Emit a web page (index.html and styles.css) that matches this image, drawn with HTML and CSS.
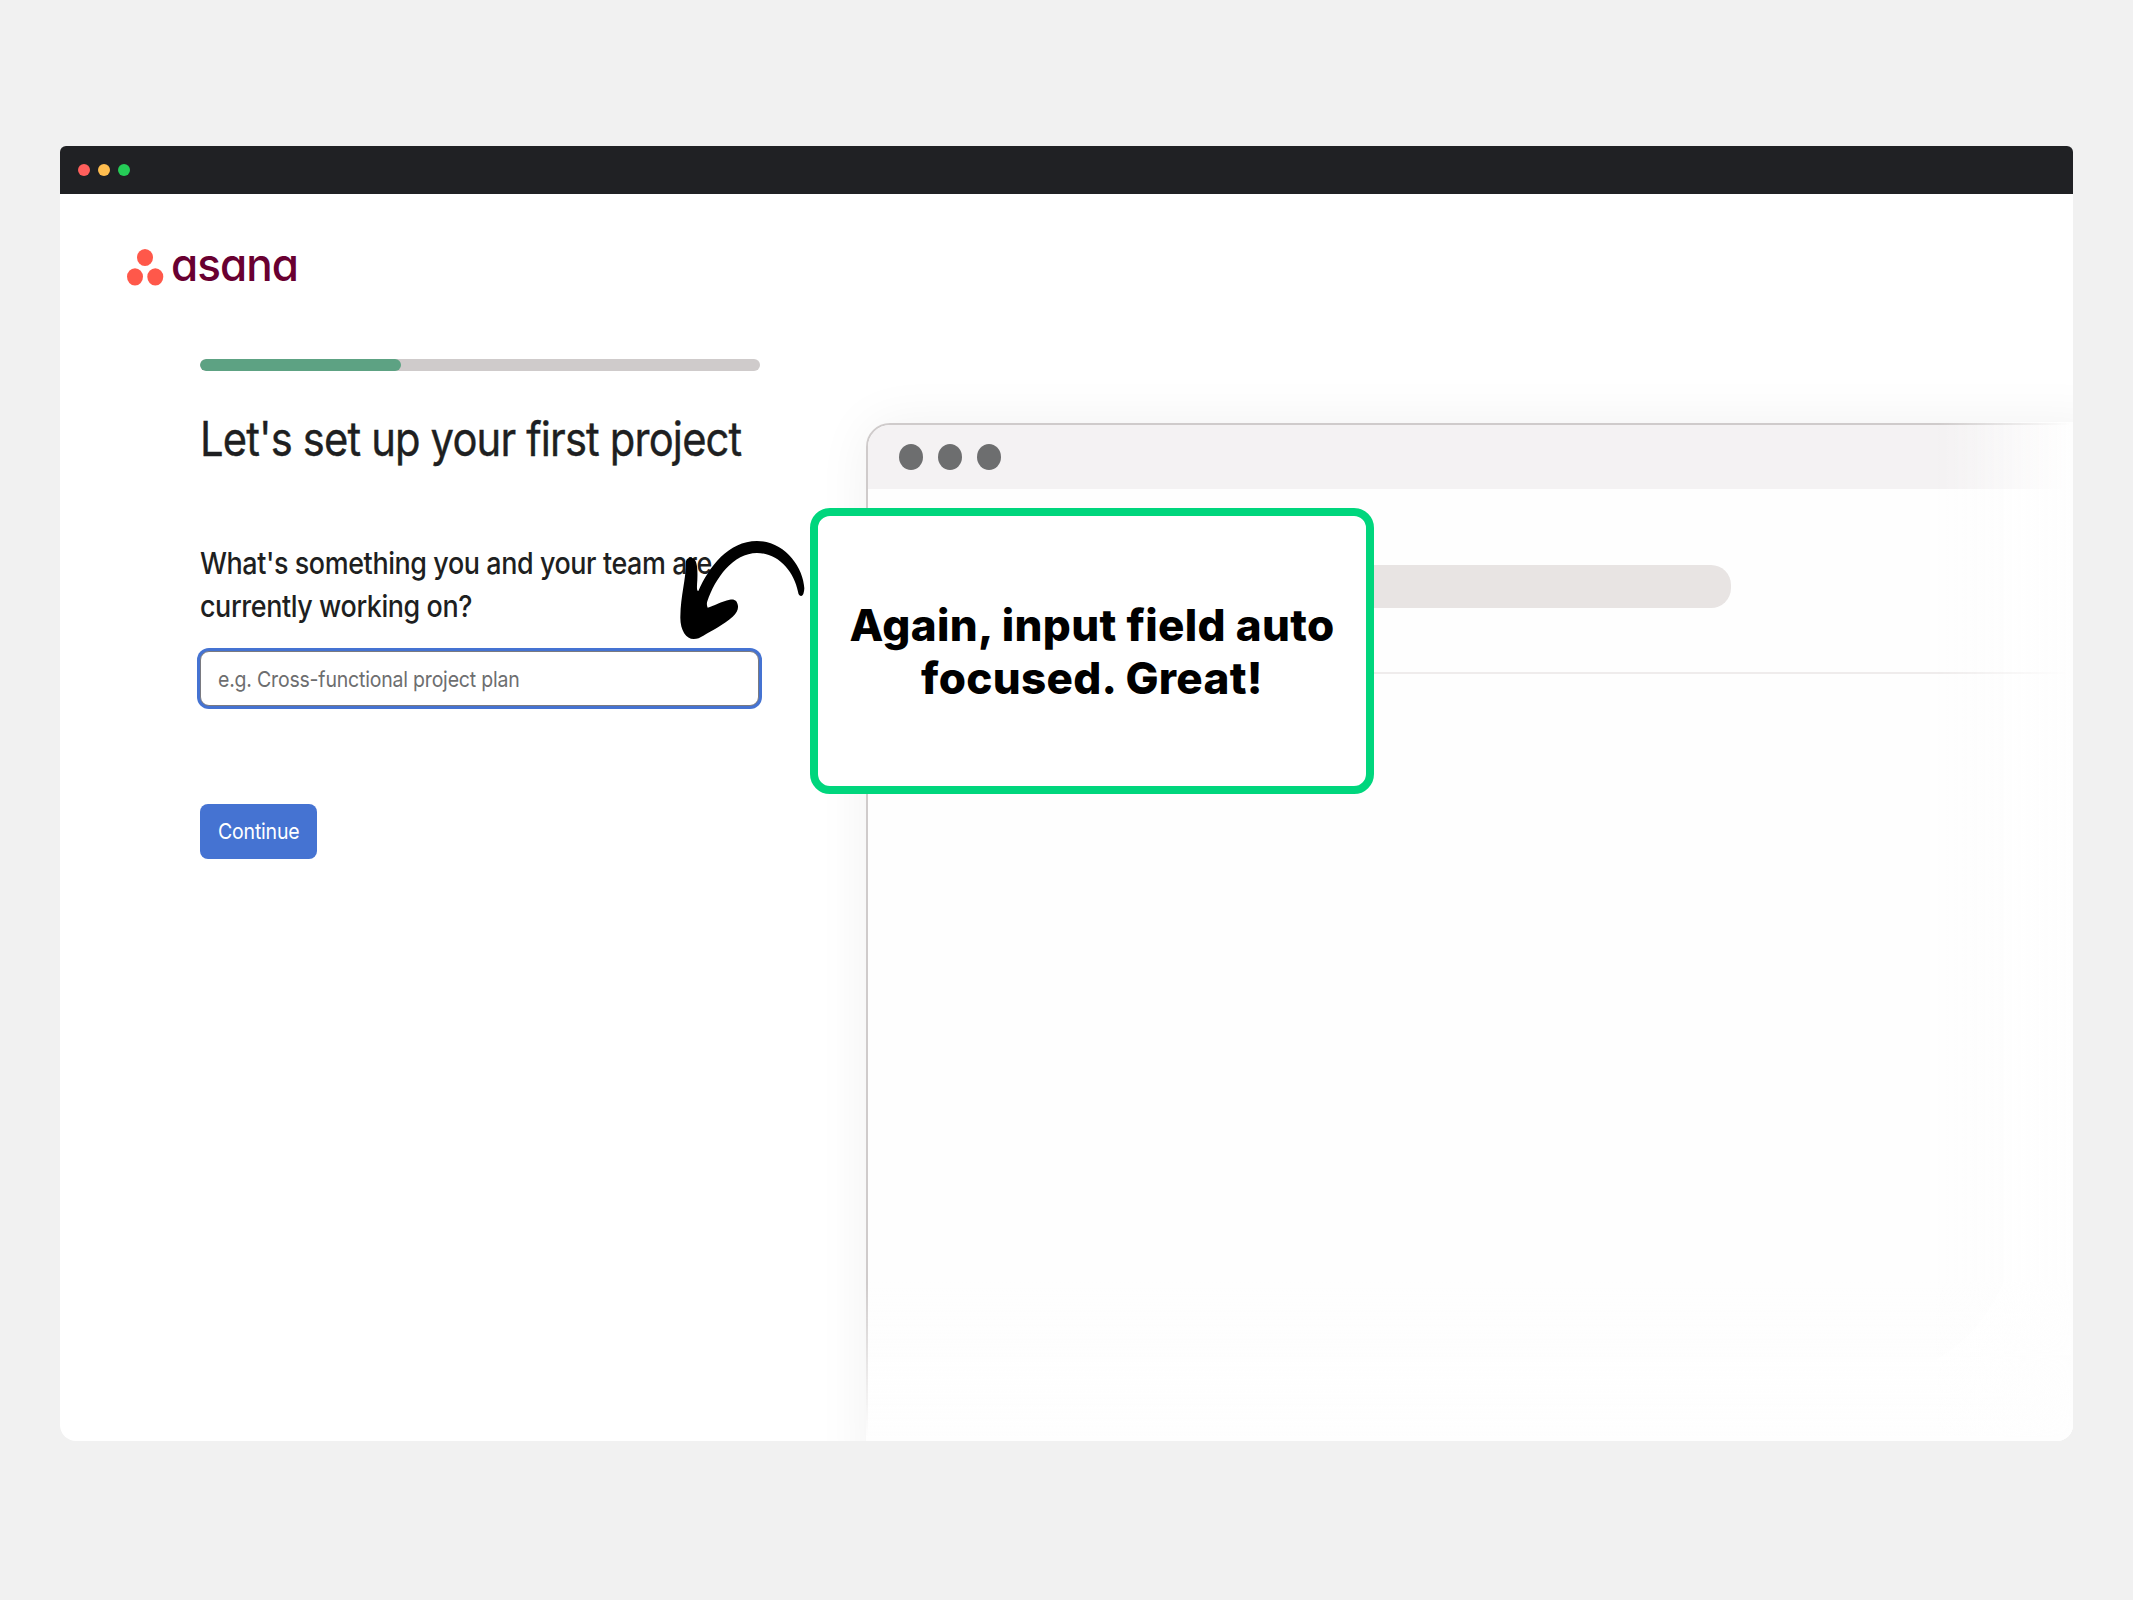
FILE: index.html
```html
<!DOCTYPE html>
<html lang="en">
<head>
<meta charset="utf-8">
<title>Asana – Set up your first project</title>
<link rel="stylesheet" href="styles.css">
</head>
<body>
<div class="window">
  <header class="titlebar">
    <span class="light light-close"></span>
    <span class="light light-min"></span>
    <span class="light light-max"></span>
  </header>
  <main class="content">
    <section class="setup">
      <div class="logo">
        <svg class="logo-mark" viewBox="0 0 38 38" width="38" height="38">
          <g fill="#ff584a">
            <ellipse cx="19" cy="9.5" rx="8" ry="8.6"/>
            <ellipse cx="9" cy="28.8" rx="8" ry="8.6"/>
            <ellipse cx="29.3" cy="28.8" rx="8" ry="8.6"/>
          </g>
        </svg>
        <span class="logo-word">asana</span>
      </div>
      <form class="form">
        <div class="progress"><div class="progress-fill"></div></div>
        <h1 class="heading"><span class="fit fit-heading">Let's set up your first project</span></h1>
        <label class="question" for="project"><span class="fit fit-question">What's something you and your team are<br>currently working on?</span></label>
        <div class="field" id="project"><span class="fit fit-placeholder">e.g. Cross-functional project plan</span></div>
        <button class="continue" type="button"><span class="fit fit-continue">Continue</span></button>
      </form>
    </section>
    <section class="preview-area">
      <div class="preview">
        <div class="preview-bar">
          <span class="preview-dot"></span>
          <span class="preview-dot"></span>
          <span class="preview-dot"></span>
        </div>
        <div class="preview-top"><div class="preview-title"></div></div>
      </div>
    </section>
  </main>
</div>
<svg class="arrow" viewBox="0 0 540 420" width="180" height="140">
  <path d="M424 228 Q432 226 433 205 C430 140 372 63 291 63 C205 63 148 140 115 213 C109 214 111 195 112 180 C113 155 112 142 109 130 C106 110 80 108 78 124 C78 180 62 225 61 290 C60 330 78 357 101 357 C112 357 120 353 130 347 C155 332 190 314 218 290 C230 280 235 268 234 258 C232 242 224 236 209 239 C185 244 160 258 143 263 C140 255 140 250 142 244 C165 175 220 99 291 99 C355 99 402 155 414 215 Q416 228 424 228 Z"/>
</svg>
<aside class="callout"><p class="callout-text">Again, input field auto<br>focused. Great!</p></aside>
</body>
</html>
```
FILE: styles.css
```css
* { box-sizing: border-box; }

body {
  margin: 0;
  width: 2133px;
  height: 1600px;
  padding: 146px 60px 159px;
  background: #f1f1f1;
  font-family: Inter, "Liberation Sans", sans-serif;
  color: #1e1f21;
  position: relative;
  overflow: hidden;
}

.window {
  width: 2013px;
  height: 1295px;
  border-radius: 6px 6px 16px 16px;
  overflow: hidden;
  background: #fff;
  display: flex;
  flex-direction: column;
}

.titlebar {
  height: 48px;
  flex: none;
  padding-left: 18px;
  background: #202124;
  display: flex;
  align-items: center;
  gap: 8px;
}
.light { width: 12px; height: 12px; border-radius: 50%; }
.light-close { background: #ff5f5c; }
.light-min { background: #ffbd4f; }
.light-max { background: #25cc57; }

.content { flex: 1; display: flex; min-height: 0; }

.setup { width: 806px; flex: none; padding: 54px 0 0 66px; }

.logo { height: 38px; display: flex; align-items: center; }
.logo-mark { flex: none; }
.logo-word {
  margin: 0 0 7px 7px;
  font-size: 46px;
  line-height: 38px;
  font-weight: 500;
  letter-spacing: -1px;
  font-feature-settings: "cv11";
  color: #690031;
  transform: scaleX(0.957);
  transform-origin: left center;
}

.form {
  width: 559.5px;
  margin: 72.5px 0 0 74px;
  display: flex;
  flex-direction: column;
  align-items: flex-start;
}

.progress {
  width: 559.5px;
  height: 12.5px;
  border-radius: 7px;
  background: #cfcbcb;
  overflow: hidden;
}
.progress-fill { width: 201px; height: 100%; border-radius: 7px; background: #5da283; }

.fit { display: inline-block; white-space: nowrap; transform-origin: left center; }
.fit-heading { transform: scaleX(0.869); letter-spacing: -0.02em; }
.fit-question { transform: scaleX(0.882); letter-spacing: -0.015em; }
.fit-placeholder { transform: scaleX(0.886); letter-spacing: -0.01em; }
.fit-continue { transform: scaleX(0.887); letter-spacing: -0.01em; }

.heading {
  margin: 38px 0 0;
  font-size: 48px;
  line-height: 60px;
  font-weight: 400;
  -webkit-text-stroke: 0.4px #1e1f21;
}
.question {
  margin-top: 73px;
  font-size: 30.5px;
  line-height: 42.7px;
  font-weight: 550;
}
.field {
  width: 559px;
  height: 55px;
  margin-top: 24px;
  padding-left: 17px;
  border: 1px solid #7a7a80;
  border-radius: 9px;
  box-shadow: 0 0 0 3px #4573d2;
  background: #fff;
  display: flex;
  align-items: center;
  font-size: 22px;
  color: #6d6e6f;
}
.continue {
  width: 117px;
  height: 55px;
  margin-top: 97.5px;
  padding: 0 0 0 18px;
  border: 0;
  border-radius: 8px;
  background: #4573d2;
  color: #fff;
  font: 400 22px Inter, sans-serif;
  text-align: left;
}

.preview-area { flex: 1; padding-top: 228.5px; position: relative; }
.preview {
  width: 1240px;
  height: 1060px;
  border: 2px solid #cfcbcb;
  border-radius: 24px 0 0 0;
  background: #fefefe;
  box-shadow: 0 0 54px rgba(0, 0, 0, 0.06);
  overflow: hidden;
}
/* Fades the mock window out toward the right and bottom edges */
.preview-area::after {
  content: "";
  position: absolute;
  left: 0;
  top: 228px;
  right: 0;
  bottom: 0;
  border-radius: 24px 0 0 0;
  background:
    linear-gradient(to right, rgba(254, 254, 254, 0) 1070px, #fefefe 1205px),
    linear-gradient(to bottom, rgba(254, 254, 254, 0) 860px, #fefefe 1015px);
}
.preview-bar {
  height: 64px;
  padding-left: 31px;
  background: #f4f2f3;
  display: flex;
  align-items: center;
  gap: 15px;
}
.preview-dot { width: 24px; height: 26px; border-radius: 50%; background: #6d6e6f; }
.preview-top {
  height: 185px;
  padding: 76px 0 0 40px;
  border-bottom: 2px solid #efecec;
}
.preview-title { width: 823px; height: 43px; border-radius: 20px; background: #e8e4e3; }

.arrow { position: absolute; left: 660px; top: 520px; }

.callout {
  position: absolute;
  left: 810px;
  top: 508px;
  width: 564px;
  height: 286px;
  padding-top: 2px;
  border: 8px solid #00d67d;
  border-radius: 20px;
  background: #fff;
  display: flex;
  align-items: center;
  justify-content: center;
}
.callout-text {
  margin: 0;
  white-space: nowrap;
  text-align: center;
  font-size: 44px;
  line-height: 53px;
  letter-spacing: 0.3px;
  font-weight: 800;
  color: #000;
}
```
